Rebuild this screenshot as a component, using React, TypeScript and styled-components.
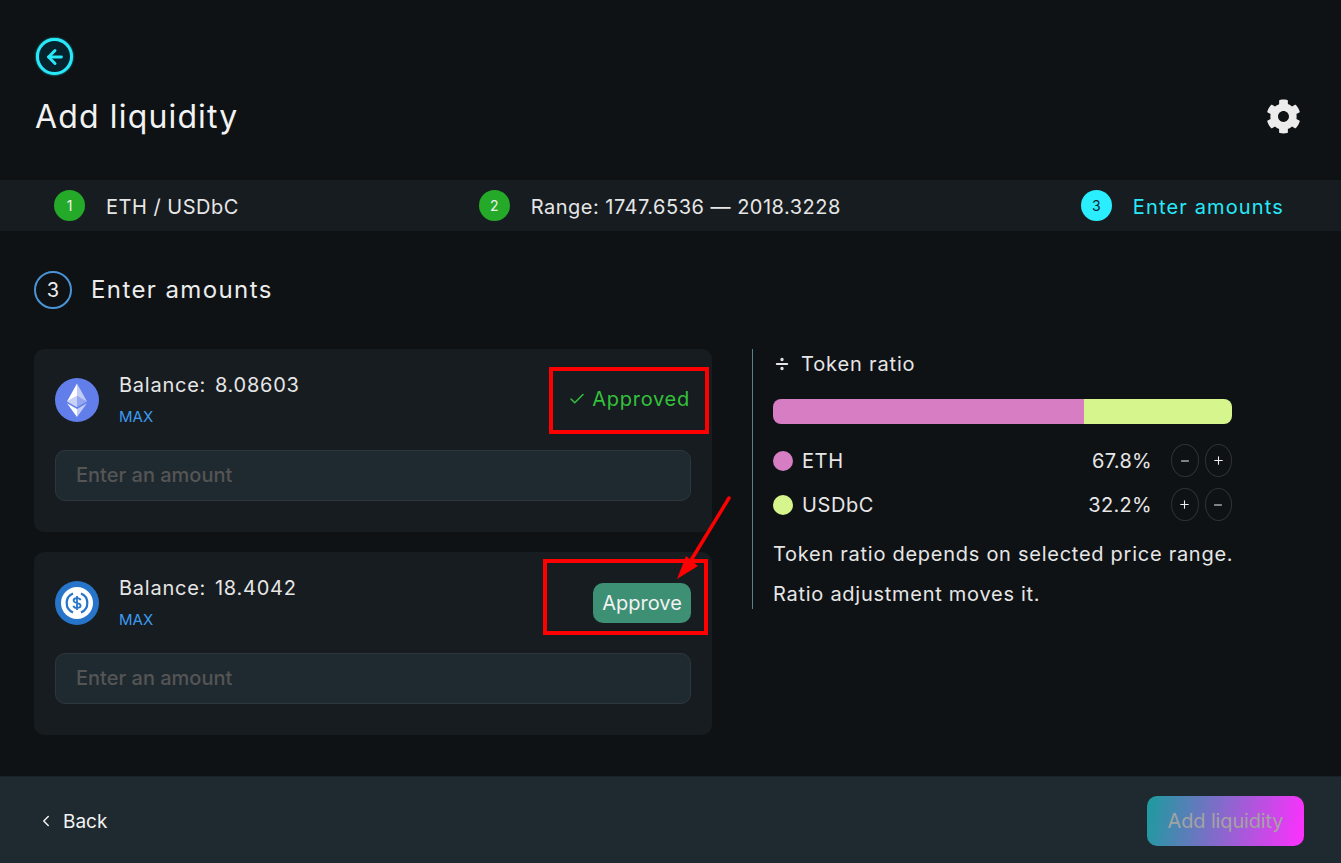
import React from 'react'
import styled, { createGlobalStyle } from 'styled-components'
import { ArrowLeft, Check, ChevronLeft, Divide, Minus, Plus } from 'lucide-react'
import { FaCog } from 'react-icons/fa'

const GlobalStyle = createGlobalStyle`
    html, body { margin:0; padding:0; background:#0e1215; }
    body { font-family:"Inter","Noto Sans",sans-serif; color:#e9e9e9; }
    * { box-sizing:border-box; }
`
const Page = styled.div`
    position:relative;
    width:1341px;
    height:863px;
    display:flex;
    flex-direction:column;
    overflow:hidden;
`
const Header = styled.header`
    height:180px;
    padding:38px 40px 0 36px;
    flex-shrink:0;
`
const BackCircle = styled.div`
    width:37px;
    height:37px;
    border:3px solid #27e9f9;
    border-radius:50%;
    background:#06222d;
    box-shadow:0 0 2px #27e9f9;
    color:#27e9f9;
    display:flex;
    align-items:center;
    justify-content:center;
`
const TitleRow = styled.div`
    display:flex;
    align-items:center;
    justify-content:space-between;
    margin-top:21px;
    margin-left:-1px;
`
const Title = styled.h1`
    margin:1px 0 -1px;
    font-size:32px;
    line-height:40px;
    font-weight:400;
    letter-spacing:1.15px;
    color:#f2f2f2;
`
const Stepper = styled.nav`
    height:51px;
    flex-shrink:0;
    background:#171c20;
    display:flex;
    align-items:center;
    justify-content:space-between;
    padding:0 57px 0 54px;
`
const Step = styled.div<{ $active?: boolean }>`
    display:flex;
    align-items:center;
    gap:21px;
    font-size:20px;
    letter-spacing:${props => props.$active ? "1.15px" : ".5px"};
    color:${props => props.$active ? "#27e9f9" : "#e6e6e6"};
`
const StepLabel = styled.span`
    margin-top:2px;
`
const StepNum = styled.span<{ $active?: boolean }>`
    width:31px;
    height:31px;
    border-radius:50%;
    background:${props => props.$active ? "#2aeefd" : "#25a929"};
    color:${props => props.$active ? "#123" : "#f0f0f0"};
    font-size:14px;
    letter-spacing:0;
    display:flex;
    align-items:center;
    justify-content:center;
`
const Main = styled.main`
    flex:1;
    padding:0 34px;
`
const SectionTitle = styled.div`
    display:flex;
    align-items:center;
    gap:20px;
    height:38px;
    margin-top:40px;
    font-size:24px;
    letter-spacing:1.4px;
    color:#ececec;
`
const SectionLabel = styled.span`
    margin:-2px 0 0 -1px;
`
const SectionNum = styled.span`
    width:38px;
    height:38px;
    border:2px solid #4a94d6;
    border-radius:50%;
    font-size:20px;
    letter-spacing:0;
    display:flex;
    align-items:center;
    justify-content:center;
`
const Columns = styled.div`
    display:flex;
    margin-top:40px;
`
const Cards = styled.div`
    width:678px;
    display:flex;
    flex-direction:column;
    gap:20px;
`
const Card = styled.section`
    height:183px;
    padding:21px;
    background:#171c20;
    border-radius:10px;
`
const CardTop = styled.div`
    height:60px;
    display:flex;
    align-items:flex-start;
`
const TokenIcon = styled.svg`
    width:44px;
    height:44px;
    margin-top:8px;
    flex-shrink:0;
`
const BalanceBlock = styled.div`
    margin-left:20px;
    flex:1;
`
const Balance = styled.div`
    font-size:20px;
    line-height:30px;
    letter-spacing:.75px;
    color:#e6e6e6;
    word-spacing:2.5px;
`
const Max = styled.div`
    font-size:15px;
    line-height:22px;
    margin-top:6px;
    color:#3c9bf0;
`
const Approved = styled.div`
    display:flex;
    align-items:center;
    gap:6px;
    margin-top:17px;
    margin-right:1px;
    font-size:20px;
    letter-spacing:.75px;
    color:#33c13b;
`
const ApproveButton = styled.button`
    width:98px;
    height:40px;
    margin-top:10px;
    border:0;
    border-radius:10px;
    background:#3d9074;
    color:#f2f2f2;
    font:inherit;
    font-size:20px;
    padding:0;
`
const AmountInput = styled.input`
    display:block;
    width:100%;
    height:51px;
    margin-top:20px;
    padding:0 20px 2px;
    background:#1f2a30;
    border:1px solid #2e373c;
    border-radius:10px;
    font:inherit;
    font-size:20px;
    font-weight:500;
    outline:none;
    &::placeholder { color:#555; opacity:1; }
`
const RatioPanel = styled.aside`
    width:481px;
    height:260px;
    margin-left:40px;
    padding-left:20px;
    border-left:1px solid #5a7d90;
`
const RatioTitle = styled.div`
    display:flex;
    align-items:center;
    gap:10px;
    height:30px;
    font-size:20px;
    letter-spacing:.85px;
    color:#e6e6e6;
`
const RatioBar = styled.div`
    height:25px;
    margin-top:20px;
    display:flex;
    border-radius:8px;
    overflow:hidden;
    width:459px;
`
const BarPart = styled.div<{ $color: string }>`
    background:${props => props.$color};
`
const TokenRow = styled.div`
    width:459px;
    display:flex;
    align-items:center;
    height:33px;
    font-size:20px;
    letter-spacing:.6px;
    color:#e6e6e6;
`
const Rows = styled.div`
    margin-top:20px;
    display:flex;
    flex-direction:column;
    gap:11px;
`
const Dot = styled.span<{ $color: string }>`
    width:20px;
    height:20px;
    border-radius:50%;
    margin-right:9px;
    background:${props => props.$color};
`
const Percent = styled.span`
    margin-left:auto;
    margin-right:19px;
    letter-spacing:.3px;
`
const RoundButton = styled.button`
    width:27.5px;
    height:33px;
    padding:0;
    border:1px solid #2e3236;
    border-radius:50%;
    background:none;
    color:#f0f0f0;
    display:flex;
    align-items:center;
    justify-content:center;
    & + & { margin-left:6px; }
`
const Note = styled.p`
    margin:0;
    font-size:20px;
    line-height:30px;
    letter-spacing:.73px;
    color:#e6e6e6;
    white-space:nowrap;
`
const Notes = styled.div`
    margin-top:18px;
    display:flex;
    flex-direction:column;
    gap:10px;
`
const Footer = styled.footer`
    height:87px;
    flex-shrink:0;
    background:#1f2a30;
    border-top:1px solid #1a2227;
    display:flex;
    align-items:center;
    justify-content:space-between;
    padding:2px 37px 0;
`
const BackLink = styled.div`
    display:flex;
    align-items:center;
    gap:8px;
    font-size:19px;
    color:#f2f2f2;
`
const AddButton = styled.button`
    width:157px;
    height:50px;
    border:0;
    border-radius:10px;
    background:linear-gradient(100deg,#1b9c9e 0%,#ff2fff 100%);
    color:#a3a3a3;
    font:inherit;
    font-size:20px;
    letter-spacing:-.15px;
    padding:0;
`
const RedBox = styled.div<{ $l: number; $t: number; $w: number; $h: number }>`
    position:absolute;
    left:${props => props.$l}px;
    top:${props => props.$t}px;
    width:${props => props.$w}px;
    height:${props => props.$h}px;
    border:4px solid #f00;
`
const Arrow = styled.svg`
    position:absolute;
    left:670px;
    top:490px;
    width:70px;
    height:95px;
`

const EthIcon = () => (
    <TokenIcon viewBox="0 0 44 44">
        <circle cx="22" cy="22" r="22" fill="#627eea" />
        <path d="M22 5.5V18l10 5.6z" fill="#fff" fillOpacity=".6" />
        <path d="M22 5.5 12 23.6 22 18z" fill="#fff" />
        <path d="M22 18v11.2l10-5.6z" fill="#fff" fillOpacity=".3" />
        <path d="M22 18l-10 5.6 10 5.6z" fill="#fff" fillOpacity=".65" />
        <path d="M22 31v8l10-13.7z" fill="#fff" fillOpacity=".6" />
        <path d="M22 31v8l-10-13.7z" fill="#fff" />
    </TokenIcon>
)

const UsdcIcon = () => (
    <TokenIcon viewBox="0 0 44 44">
        <circle cx="22" cy="22" r="22" fill="#2775ca" />
        <circle cx="22" cy="22" r="16" fill="#fff" />
        <path d="M18 12.5a10.3 10.3 0 0 0 0 19M26 12.5a10.3 10.3 0 0 1 0 19" fill="none" stroke="#2775ca" strokeWidth="2.2" />
        <path d="M25.5 19.2c-.3-1.4-1.6-2.1-3.5-2.1-2 0-3.4.9-3.4 2.4 0 3.4 7 1.7 7 5.1 0 1.5-1.5 2.4-3.6 2.4-1.9 0-3.3-.8-3.6-2.3M22 15v14" fill="none" stroke="#2775ca" strokeWidth="1.8" />
    </TokenIcon>
)

export default function App() {
    return (
        <Page>
            <GlobalStyle />
            <Header>
                <BackCircle><ArrowLeft size={22} strokeWidth={3.2} /></BackCircle>
                <TitleRow>
                    <Title>Add liquidity</Title>
                    <FaCog size={35} color="#ececec" />
                </TitleRow>
            </Header>
            <Stepper>
                <Step><StepNum>1</StepNum><StepLabel>ETH / USDbC</StepLabel></Step>
                <Step><StepNum>2</StepNum><StepLabel>Range: 1747.6536 — 2018.3228</StepLabel></Step>
                <Step $active><StepNum $active>3</StepNum><StepLabel>Enter amounts</StepLabel></Step>
            </Stepper>
            <Main>
                <SectionTitle><SectionNum>3</SectionNum><SectionLabel>Enter amounts</SectionLabel></SectionTitle>
                <Columns>
                    <Cards>
                        <Card>
                            <CardTop>
                                <EthIcon />
                                <BalanceBlock>
                                    <Balance>Balance: 8.08603</Balance>
                                    <Max>MAX</Max>
                                </BalanceBlock>
                                <Approved><Check size={18} strokeWidth={2} />Approved</Approved>
                            </CardTop>
                            <AmountInput placeholder="Enter an amount" />
                        </Card>
                        <Card>
                            <CardTop>
                                <UsdcIcon />
                                <BalanceBlock>
                                    <Balance>Balance: 18.4042</Balance>
                                    <Max>MAX</Max>
                                </BalanceBlock>
                                <ApproveButton>Approve</ApproveButton>
                            </CardTop>
                            <AmountInput placeholder="Enter an amount" />
                        </Card>
                    </Cards>
                    <RatioPanel>
                        <RatioTitle><Divide size={18} strokeWidth={2.5} />Token ratio</RatioTitle>
                        <RatioBar>
                            <BarPart $color="#d67dc4" style={{ width: '67.8%' }} />
                            <BarPart $color="#d6f58c" style={{ width: '32.2%' }} />
                        </RatioBar>
                        <Rows>
                            <TokenRow>
                                <Dot $color="#d67dc4" />ETH<Percent>67.8%</Percent>
                                <RoundButton><Minus size={12} /></RoundButton>
                                <RoundButton><Plus size={13} /></RoundButton>
                            </TokenRow>
                            <TokenRow>
                                <Dot $color="#d6f58c" />USDbC<Percent>32.2%</Percent>
                                <RoundButton><Plus size={13} /></RoundButton>
                                <RoundButton><Minus size={12} /></RoundButton>
                            </TokenRow>
                        </Rows>
                        <Notes>
                            <Note>Token ratio depends on selected price range.</Note>
                            <Note>Ratio adjustment moves it.</Note>
                        </Notes>
                    </RatioPanel>
                </Columns>
            </Main>
            <Footer>
                <BackLink><ChevronLeft size={18} strokeWidth={2} />Back</BackLink>
                <AddButton>Add liquidity</AddButton>
            </Footer>
            <RedBox $l={549} $t={367} $w={160} $h={67} />
            <RedBox $l={543} $t={559} $w={165} $h={76} />
            <Arrow viewBox="0 0 70 95">
                <path d="M59 8 20 72" stroke="#f00" strokeWidth="3.5" strokeLinecap="round" />
                <path d="M7 89 16 66 28 76z" fill="#f00" />
            </Arrow>
        </Page>
    )
}
